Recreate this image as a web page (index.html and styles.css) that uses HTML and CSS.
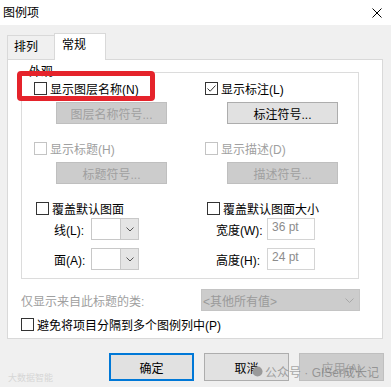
FILE: index.html
```html
<!DOCTYPE html>
<html lang="zh">
<head>
<meta charset="utf-8">
<title>图例项</title>
<link rel="stylesheet" href="styles.css">
</head>
<body>
<div class="titlebar">
  <span class="title">图例项</span>
  <svg class="close" viewBox="0 0 10 10" width="10" height="10"><path d="M0.5 0.5 L9.5 9.5 M9.5 0.5 L0.5 9.5" stroke="#000" stroke-width="1" fill="none"/></svg>
</div>
<div class="tabs">
  <div class="tab">排列</div>
  <div class="tab active">常规</div>
</div>
<div class="panel">
  <fieldset class="group">
    <legend>外观</legend>
    <div class="grid">
      <div class="col">
        <div class="check"><span class="cb"></span>显示图层名称(N)</div>
        <div class="btn disabled sym">图层名称符号...</div>
        <div class="check off spaced"><span class="cb"></span>显示标题(H)</div>
        <div class="btn disabled sym">标题符号...</div>
        <div class="check spaced override"><span class="cb"></span>覆盖默认图面</div>
        <div class="field">
          <span class="field-label">线(L):</span>
          <div class="combo"><span class="combo-arrow"><svg width="8" height="5" viewBox="0 0 8 5"><path d="M0.5 0.5 L4 4 L7.5 0.5" stroke="#555" fill="none"/></svg></span></div>
        </div>
        <div class="field">
          <span class="field-label">面(A):</span>
          <div class="combo"><span class="combo-arrow"><svg width="8" height="5" viewBox="0 0 8 5"><path d="M0.5 0.5 L4 4 L7.5 0.5" stroke="#555" fill="none"/></svg></span></div>
        </div>
      </div>
      <div class="col col-right">
        <div class="check"><span class="cb"><svg width="11" height="11" viewBox="0 0 11 11"><path d="M1.5 5.5 L4.2 8.2 L9.5 2.5" stroke="#333" stroke-width="1" fill="none"/></svg></span>显示标注(L)</div>
        <div class="btn sym">标注符号...</div>
        <div class="check off spaced"><span class="cb"></span>显示描述(D)</div>
        <div class="btn disabled sym">描述符号...</div>
        <div class="check spaced override"><span class="cb"></span>覆盖默认图面大小</div>
        <div class="field">
          <span class="field-label">宽度(W):</span>
          <div class="num">36 pt</div>
        </div>
        <div class="field">
          <span class="field-label">高度(H):</span>
          <div class="num">24 pt</div>
        </div>
      </div>
    </div>
  </fieldset>
  <div class="filter">
    <span>仅显示来自此标题的类:</span>
    <div class="select"><span>&lt;其他所有值&gt;</span><svg width="9" height="5" viewBox="0 0 9 5"><path d="M0.5 0.5 L4.5 4.5 L8.5 0.5" stroke="#a8a8a8" fill="none"/></svg></div>
  </div>
  <div class="check last"><span class="cb"></span>避免将项目分隔到多个图例列中(P)</div>
</div>
<div class="actions">
  <div class="btn default">确定</div>
  <div class="btn">取消</div>
  <div class="btn disabled">应用(A)</div>
</div>
<div class="highlight"></div>
<div class="watermark">
  <svg width="11" height="11" viewBox="0 0 12 12"><circle cx="6" cy="6" r="5.5" fill="#9a9a9a"/></svg>
  <span>公众号 · GISer成长记</span>
</div>
<div class="watermark-left">大数据智能</div>
</body>
</html>
```

FILE: styles.css
```css
* { box-sizing: border-box; }
html, body { margin: 0; padding: 0; }
body {
  width: 391px;
  height: 387px;
  background: #f0f0f0;
  font-family: "Liberation Sans", "Noto Sans CJK SC", sans-serif;
  font-size: 12px;
  color: #000;
  position: relative;
  overflow: hidden;
}
.titlebar {
  height: 25px;
  background: #fff;
  display: flex;
  align-items: center;
  justify-content: space-between;
  padding: 0 9px 0 3px;
}
.title { line-height: 16px; }
.close { display: block; }

.tabs {
  display: flex;
  align-items: flex-end;
  height: 26px;
  margin: 8px 0 0 7px;
}
.tab {
  height: 24px;
  width: 47px;
  border: 1px solid #d9d9d9;
  border-right: none;
  border-bottom: none;
  background: #f0f0f0;
  padding-left: 6px;
  line-height: 22px;
}
.tab.active {
  height: 27px;
  width: 52px;
  border-right: 1px solid #d9d9d9;
  background: #fff;
  margin-bottom: -1px;
  position: relative;
  padding-left: 7px;
}

.panel {
  margin-left: 7px;
  width: 376px;
  height: 280px;
  background: #fff;
  border: 1px solid #d9d9d9;
  padding-left: 13px;
}
.group {
  margin: 4px 0 0;
  padding: 0 0 8px 12px;
  width: 338px;
  border: 1px solid #dcdcdc;
  min-width: 0;
}
.group legend {
  padding: 0 2px;
  margin-left: -7px;
  line-height: 16px;
}
.grid {
  display: grid;
  grid-template-columns: 171px 1fr;
}
.col { display: flex; flex-direction: column; }

.check {
  display: flex;
  align-items: center;
  height: 16px;
  white-space: nowrap;
}
.cb {
  width: 13px;
  height: 13px;
  border: 1px solid #333;
  background: #fff;
  margin-right: 3px;
  flex: none;
  display: flex;
  align-items: center;
  justify-content: center;
}
.check.off { color: #a0a0a0; }
.check.off .cb { border-color: #c4c4c4; }
.spaced { margin-top: 16px; }
.override .cb { margin-left: 2px; }

.btn {
  height: 22px;
  display: flex;
  align-items: center;
  justify-content: center;
  border: 1px solid #adadad;
  background: #e1e1e1;
}
.btn.disabled {
  background: #cccccc;
  border-color: #bfbfbf;
  color: #a0a0a0;
}
.sym {
  width: 111px;
  margin: 6px 0 0 22px;
}

.field {
  display: flex;
  align-items: center;
  height: 22px;
  margin: 2px 0 0 20px;
}
.field + .field { margin-top: 8px; }
.field-label { width: 37px; }
.col-right .field { margin-left: 11px; }
.col-right .field-label { width: 51px; }

.combo {
  width: 48px;
  height: 22px;
  border: 1px solid #c8c8c8;
  background: #fff;
  display: flex;
  justify-content: flex-end;
}
.combo-arrow {
  width: 18px;
  background: #e5e5e5;
  border-left: 1px solid #c8c8c8;
  display: flex;
  align-items: center;
  justify-content: center;
}
.num {
  width: 48px;
  height: 22px;
  border: 1px solid #d4d4d4;
  color: #8c8c8c;
  padding: 0 0 0 4px;
  line-height: 17px;
}

.filter {
  display: flex;
  align-items: center;
  justify-content: space-between;
  width: 339px;
  margin-top: 10px;
  color: #a0a0a0;
}
.select {
  width: 159px;
  height: 22px;
  background: #cccccc;
  border: 1px solid #c4c4c4;
  display: flex;
  align-items: center;
  justify-content: space-between;
  padding: 0 5px 0 1px;
  color: #9a9a9a;
}
.last { margin-top: 5px; }

.actions {
  display: flex;
  justify-content: flex-end;
  gap: 10px;
  padding-right: 7px;
  margin-top: 14px;
}
.actions .btn {
  width: 85px;
  height: 28px;
}
.btn.default { border: 2px solid #0078d7; }

.highlight {
  position: absolute;
  left: 17px;
  top: 71px;
  width: 138px;
  height: 30px;
  border: 5px solid #e5232b;
  border-radius: 4px;
}
.watermark {
  position: absolute;
  left: 252px;
  top: 363px;
  display: flex;
  align-items: center;
  gap: 2px;
  font-size: 12px;
  color: rgba(110, 110, 110, 0.6);
  white-space: nowrap;
}
.watermark-left {
  position: absolute;
  left: 8px;
  top: 371px;
  font-size: 9px;
  color: #d6d6d6;
}
```
